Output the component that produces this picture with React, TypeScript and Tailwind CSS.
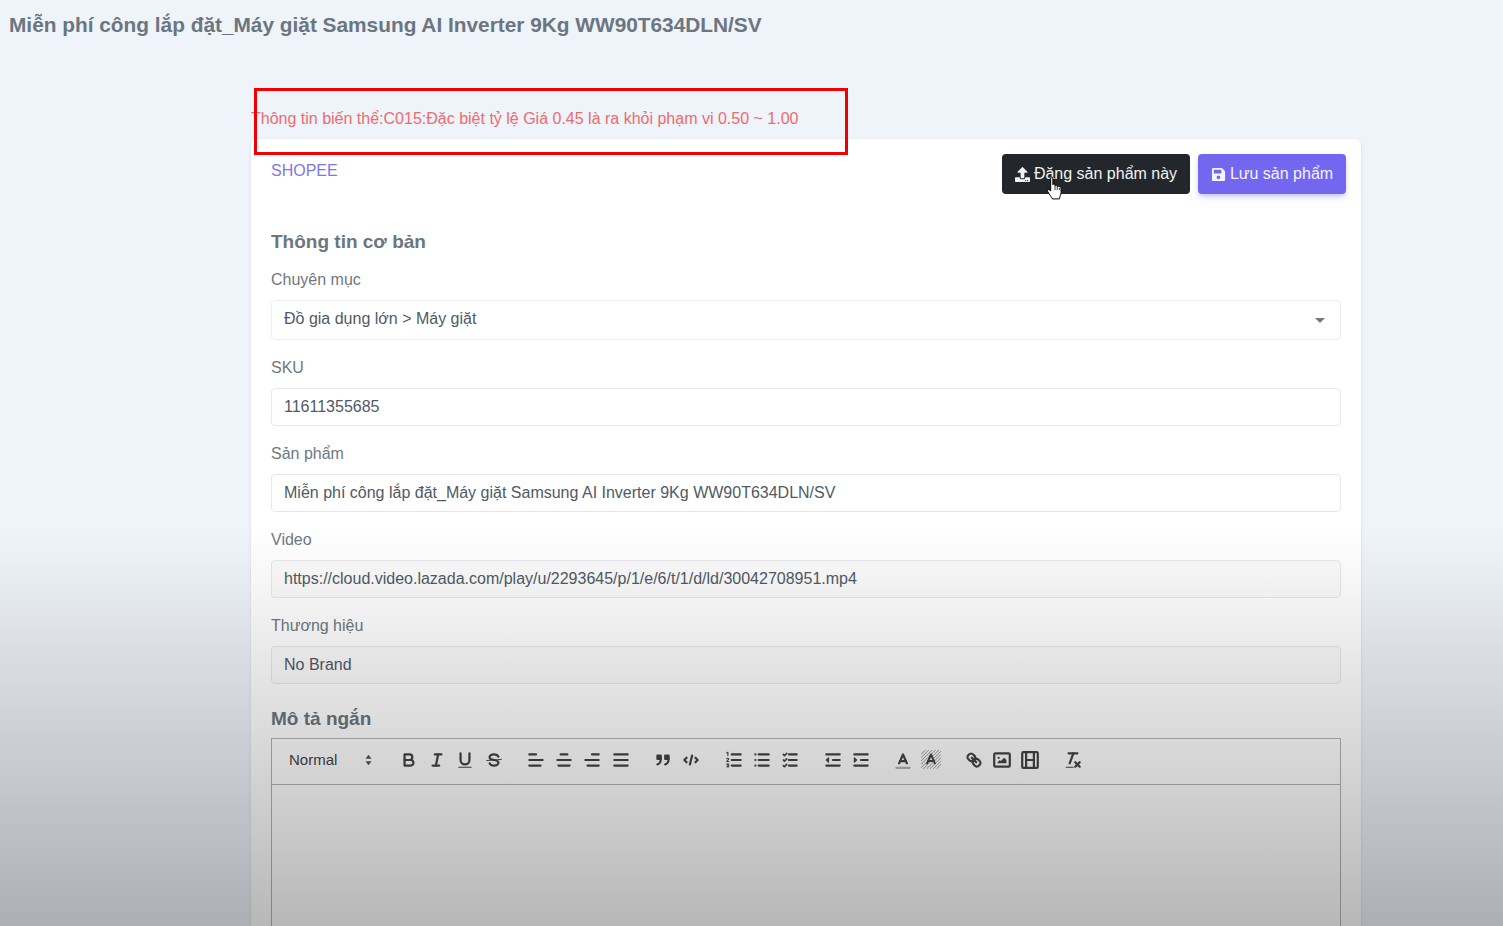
import type { ReactNode } from "react";
import { FaSave, FaUpload } from "react-icons/fa";

const font = "font-['Liberation_Sans',Arial,sans-serif]";

function Field({ label, value, grey }: { label: string; value: string; grey?: boolean }) {
    return (
        <div className="mb-[18px]">
            <div className="text-[16px] leading-[19px] text-[#6f7880] mb-[11px] h-[19px]">{label}</div>
            <div
                className={`h-[38px] px-3 flex items-center rounded border border-[#e6e8eb] text-[16px] text-[#4f5a66] ${grey ? "bg-[#fbfbfb]" : "bg-white"}`}
            >
                {value}
            </div>
        </div>
    );
}

function Tool({ children }: { children: ReactNode }) {
    return (
        <span className="w-[28.3px] h-6 flex items-center justify-center shrink-0">
            <svg
                viewBox="0 0 18 18"
                className="w-[20px] h-[20px] text-[#444]"
                fill="none"
                stroke="currentColor"
                strokeWidth="2"
                strokeLinecap="round"
                strokeLinejoin="round"
            >
                {children}
            </svg>
        </span>
    );
}

function Group({ children }: { children: ReactNode }) {
    return <div className="flex mr-[14px]">{children}</div>;
}

function Lines({ x1 = 7, x2 = 15 }: { x1?: number; x2?: number }) {
    return (
        <>
            <line x1={x1} x2={x2} y1="4" y2="4" />
            <line x1={x1} x2={x2} y1="9" y2="9" />
            <line x1={x1} x2={x2} y1="14" y2="14" />
        </>
    );
}

function Toolbar() {
    return (
        <div className="h-[46px] border-b border-[#b4b4b4] flex items-center pl-[17px] pb-[3px] text-[#444]">
            <div className="w-[105.5px] flex items-center text-[15px] shrink-0">
                <span>Normal</span>
                <svg viewBox="0 0 10 14" className="w-[9px] h-[12px] ml-[27px] text-[#555]" fill="currentColor">
                    <path d="M5 1l3.5 4.5h-7zM5 13L1.5 8.500h7z" />
                </svg>
            </div>
            <Group>
                <Tool>
                    <path d="M5,4H9.500A2.500,2.500,0,0,1,12,6.500v0A2.500,2.500,0,0,1,9.500,9H5V4Z" />
                    <path d="M5,9h5.500A2.500,2.500,0,0,1,13,11.500v0A2.500,2.500,0,0,1,10.500,14H5V9Z" />
                </Tool>
                <Tool>
                    <line x1="7" x2="13" y1="4" y2="4" />
                    <line x1="5" x2="11" y1="14" y2="14" />
                    <line x1="8" x2="10" y1="14" y2="4" />
                </Tool>
                <Tool>
                    <path d="M5,3V9a4,4,0,0,0,4,4h0a4,4,0,0,0,4-4V3" />
                    <line x1="3.500" x2="14.500" y1="15.500" y2="15.500" strokeWidth="1" />
                </Tool>
                <Tool>
                    <line x1="15.500" x2="2.500" y1="8.500" y2="9.500" strokeWidth="1" />
                    <path d="M12.900 6C12.400 4.800 10.900 4 9 4 6.800 4 5 5.100 5 6.500c0 1.500 1.600 2.100 4 2.500 2.400.4 4 1 4 2.500 0 1.400-1.800 2.500-4 2.500-1.900 0-3.400-.8-3.900-2" />
                </Tool>
            </Group>
            <Group>
                <Tool>
                    <line x1="3" x2="15" y1="9" y2="9" />
                    <line x1="3" x2="13" y1="14" y2="14" />
                    <line x1="3" x2="9" y1="4" y2="4" />
                </Tool>
                <Tool>
                    <line x1="15" x2="3" y1="9" y2="9" />
                    <line x1="14" x2="4" y1="14" y2="14" />
                    <line x1="12" x2="6" y1="4" y2="4" />
                </Tool>
                <Tool>
                    <line x1="15" x2="3" y1="9" y2="9" />
                    <line x1="15" x2="5" y1="14" y2="14" />
                    <line x1="15" x2="9" y1="4" y2="4" />
                </Tool>
                <Tool>
                    <Lines x1={3} />
                </Tool>
            </Group>
            <Group>
                <Tool>
                    <rect x="4" y="5" width="3" height="3" fill="currentColor" />
                    <rect x="11" y="5" width="3" height="3" fill="currentColor" />
                    <path d="M7,8c0,4-3,5-3,5" />
                    <path d="M14,8c0,4-3,5-3,5" />
                </Tool>
                <Tool>
                    <polyline points="5 7 3 9 5 11" />
                    <polyline points="13 7 15 9 13 11" />
                    <line x1="10" x2="8" y1="5" y2="13" />
                </Tool>
            </Group>
            <Group>
                <Tool>
                    <Lines />
                    <g strokeWidth="1">
                        <path d="M2.500 2.500l1-.5v3" />
                        <path d="M2.500 7.800c.3-.6 1.700-.5 1.700.3 0 .7-1.700 1.300-1.700 2.200h1.800" />
                        <path d="M2.500 12.700h1.700l-.9 1c1 0 1.200.5 1 1-.2.600-1.300.6-1.800.2" />
                    </g>
                </Tool>
                <Tool>
                    <Lines x1={6} />
                    <line x1="3" x2="3" y1="4" y2="4" />
                    <line x1="3" x2="3" y1="9" y2="9" />
                    <line x1="3" x2="3" y1="14" y2="14" />
                </Tool>
                <Tool>
                    <Lines x1={8} />
                    <g strokeWidth="1.500">
                        <polyline points="3 4 4 5 6 3" />
                        <polyline points="3 9 4 10 6 8" />
                        <polyline points="3 14 4 15 6 13" />
                    </g>
                </Tool>
            </Group>
            <Group>
                <Tool>
                    <line x1="3" x2="15" y1="14" y2="14" />
                    <line x1="3" x2="15" y1="4" y2="4" />
                    <line x1="9" x2="15" y1="9" y2="9" />
                    <polygon points="5 7 5 11 3 9 5 7" fill="currentColor" strokeWidth="1" />
                </Tool>
                <Tool>
                    <line x1="3" x2="15" y1="14" y2="14" />
                    <line x1="3" x2="15" y1="4" y2="4" />
                    <line x1="9" x2="15" y1="9" y2="9" />
                    <polygon points="3 7 3 11 5 9 3 7" fill="currentColor" strokeWidth="1" />
                </Tool>
            </Group>
            <Group>
                <Tool>
                    <line x1="3" x2="15" y1="16" y2="16" opacity="0.4" />
                    <polyline points="5.500 12 9 4 12.500 12" />
                    <line x1="11.630" x2="6.380" y1="10" y2="10" />
                </Tool>
                <Tool>
                    <g strokeWidth="0.800" opacity="0.6" strokeLinecap="butt">
                        <path d="M0 4l4-4M0 7l7-7M0 10L10 0M0 13L13 0M0 16L16 0M2 17L18 1M5 17L18 4M8 17L18 7M11 17l7-7M14 17l4-4" />
                    </g>
                    <polyline points="5.500 12 9 4 12.500 12" strokeWidth="1.800" />
                    <line x1="11.630" x2="6.380" y1="10" y2="10" strokeWidth="1.800" />
                </Tool>
            </Group>
            <Group>
                <Tool>
                    <line x1="7" x2="11" y1="7" y2="11" />
                    <path d="M8.900,4.577a3.476,3.476,0,0,1,.36,4.679A3.476,3.476,0,0,1,4.577,8.900C3.185,7.500,2.035,6.400,4.217,4.217S7.500,3.185,8.900,4.577Z" />
                    <path d="M13.423,9.100a3.476,3.476,0,0,0-4.679-.36,3.476,3.476,0,0,0,.36,4.679c1.392,1.392,2.500,2.542,4.679.36S14.815,10.500,13.423,9.100Z" />
                </Tool>
                <Tool>
                    <rect x="2" y="3" width="14" height="12" rx="1" />
                    <circle cx="6" cy="7" r="1" fill="currentColor" stroke="none" />
                    <polygon points="5 12 5 11 7 9 8 10 11 7 13 9 13 12 5 12" fill="currentColor" stroke="none" />
                </Tool>
                <Tool>
                    <rect x="2" y="2" width="14" height="14" rx="1" />
                    <line x1="5.500" x2="5.500" y1="2" y2="16" />
                    <line x1="12.500" x2="12.500" y1="2" y2="16" />
                    <line x1="5.500" x2="12.500" y1="9" y2="9" />
                </Tool>
            </Group>
            <Group>
                <Tool>
                    <line x1="5" x2="13" y1="3" y2="3" />
                    <line x1="6" x2="9.350" y1="12" y2="3" />
                    <line x1="11" x2="15" y1="11" y2="15" />
                    <line x1="15" x2="11" y1="11" y2="15" />
                    <line x1="3" x2="9" y1="15.500" y2="15.500" strokeWidth="1" />
                </Tool>
            </Group>
        </div>
    );
}

function HandCursor() {
    return (
        <svg viewBox="0 0 15 22" className="absolute left-[44px] top-[22px] w-[17px] h-[24px]" fill="#fff" stroke="#000" strokeWidth="0.900" strokeLinejoin="round">
            <path d="M4 1.800c0-1.300 2-1.300 2 0V8c0-1 2-1 2 0v1c0-1 2-1 2 0v1c0-1 2-1 2 0 .5-.3 1.500 0 1.500 1v4c0 2-1 3-1.500 6H5.500c-.5-2-3-4-4.300-7-.6-1.500 1-2.300 2-1.200l.8 1Z" />
            <path d="M8 9v4M10 10v3M12 11v2" fill="none" strokeWidth="0.700" />
        </svg>
    );
}

export default function App() {
    return (
        <div className={`${font} relative h-[926px] overflow-hidden bg-[#eff3fa]`}>
            <h1 className="pl-[9px] pt-[12px] text-[20.830px] leading-[26px] font-bold text-[#6b7680]">
                Miễn phí công lắp đặt_Máy giặt Samsung AI Inverter 9Kg WW90T634DLN/SV
            </h1>

            <div className="ml-[251px] w-[1110px]">
                <p className="mt-[71px] h-[30px] text-[16px] leading-[19px] text-[#ee6b6e]">
                    Thông tin biến thể:C015:Đặc biệt tỷ lệ Giá 0.45 là ra khỏi phạm vi 0.50 ~ 1.00
                </p>

                <div className="bg-white rounded-t-md h-[800px] pt-[15px] px-5 shadow-sm">
                    <div className="flex items-start justify-between -mr-[5px] h-[40px]">
                        <span className="text-[16px] leading-[19px] mt-[7px] text-[#7f77e8]">SHOPEE</span>
                        <div className="flex gap-2">
                            <button className="relative h-10 w-[188px] bg-[#23272c] rounded text-[#f2f2f2] text-[16px] flex items-center justify-center gap-[4px]">
                                <FaUpload className="w-[15px] h-[15px]" />
                                Đăng sản phẩm này
                                <HandCursor />
                            </button>
                            <button className="h-10 w-[148px] bg-[#7367f0] rounded text-[#f4f3ff] text-[16px] flex items-center justify-center gap-[4px] shadow-md shadow-[#7367f0]/30">
                                <FaSave className="w-[15px] h-[15px]" />
                                Lưu sản phẩm
                            </button>
                        </div>
                    </div>

                    <h2 className="mt-[36px] mb-[16px] text-[19px] leading-[24px] font-bold text-[#6b7680]">Thông tin cơ bản</h2>

                    <div className="mb-[18px]">
                        <div className="text-[16px] leading-[19px] text-[#6f7880] mb-[11px] h-[19px]">Chuyên mục</div>
                        <div className="h-[40px] px-3 pb-[2px] flex items-center justify-between rounded border border-[#eceef1] text-[16px] text-[#4f5a66]">
                            <span>Đồ gia dụng lớn &gt; Máy giặt</span>
                            <span className="mr-[3px] mt-[3px] w-0 h-0 border-x-[5px] border-x-transparent border-t-[5px] border-t-[#777]" />
                        </div>
                    </div>

                    <Field label="SKU" value="11611355685" />
                    <Field label="Sản phẩm" value="Miễn phí công lắp đặt_Máy giặt Samsung AI Inverter 9Kg WW90T634DLN/SV" />
                    <Field label="Video" value="https://cloud.video.lazada.com/play/u/2293645/p/1/e/6/t/1/d/ld/30042708951.mp4" grey />
                    <Field label="Thương hiệu" value="No Brand" grey />

                    <h3 className="mt-[23px] mb-[7px] text-[19px] leading-[24px] font-bold text-[#6b7680]">Mô tả ngắn</h3>
                    <div className="h-[300px] border border-[#b4b4b4]">
                        <Toolbar />
                    </div>
                </div>
            </div>

            {/* video style shade over the lower part */}
            <div className="absolute inset-x-0 top-[530px] bottom-0 pointer-events-none bg-gradient-to-b from-transparent to-black/28" />
            {/* red highlight drawn on the capture */}
            <div className="absolute left-[254px] top-[88px] w-[594px] h-[67px] border-[3px] border-[#f00000] pointer-events-none" />
        </div>
    );
}
